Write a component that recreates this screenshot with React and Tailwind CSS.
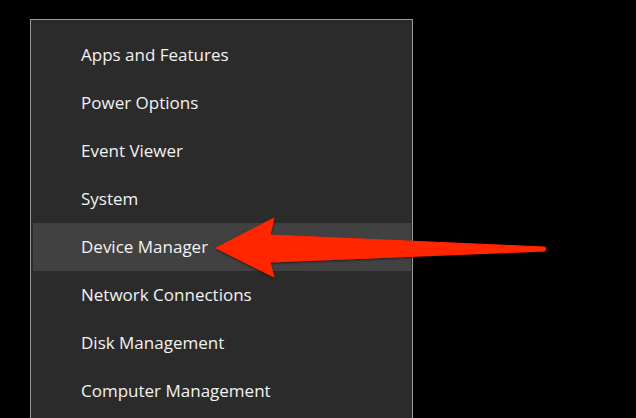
import React from "react";

const items = [
  "Apps and Features",
  "Power Options",
  "Event Viewer",
  "System",
  "Device Manager",
  "Network Connections",
  "Disk Management",
  "Computer Management",
];

export default function App() {
  return (
    <div className="relative w-[636px] h-[418px] overflow-hidden bg-black" style={{ fontFamily: '"Open Sans", "Noto Sans", sans-serif' }}>
      <div className="ml-[30px] mt-[19px] w-[383px] border border-[#9a9a9a] bg-[#2b2b2b] pt-[11px] pb-[40px]">
        {items.map((t) => (
          <div
            key={t}
            className={`ml-[2px] mr-[1px] h-[48px] flex items-center pl-[48px] text-[17px] text-[#f2f2f2] ${t === "Device Manager" ? "bg-[#414141]" : ""}`}
          >
            {t}
          </div>
        ))}
      </div>
      <svg className="absolute left-0 top-0" width="636" height="418" viewBox="0 0 636 418">
        <defs>
          <filter id="sh" x="-10%" y="-30%" width="120%" height="160%">
            <feDropShadow dx="0" dy="1" stdDeviation="1.2" floodColor="#000" floodOpacity="0.6" />
          </filter>
        </defs>
        <path
          d="M216 248 L274 218 L270 235 L544 247 A2 2 0 0 1 544 251 L270 262 L274 277 Z"
          fill="#ff2600"
          stroke="#ff2600"
          strokeWidth="1"
          strokeLinejoin="round"
          filter="url(#sh)"
        />
      </svg>
    </div>
  );
}
